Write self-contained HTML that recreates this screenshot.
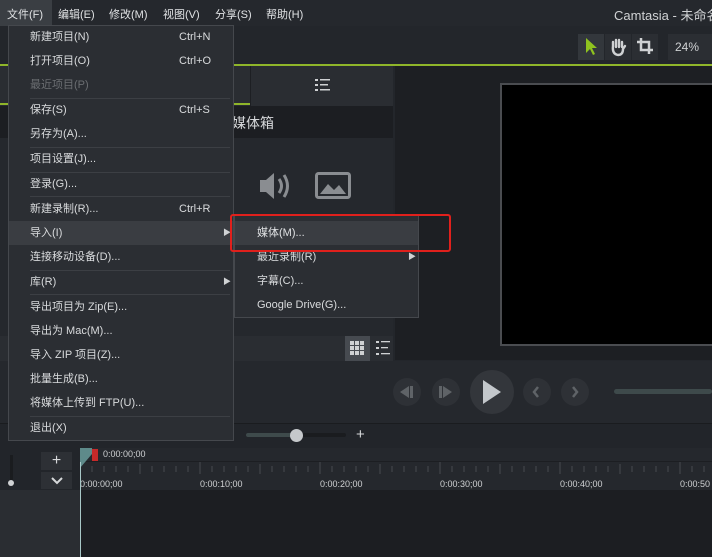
<!DOCTYPE html>
<html><head><meta charset="utf-8"><style>
*{margin:0;padding:0;box-sizing:border-box}
body{width:712px;height:557px;overflow:hidden;background:#23262b;font-family:"Liberation Sans","Noto Sans CJK SC",sans-serif;color:#d6d8da;font-size:11px;position:relative}
.a{position:absolute}
.mi{position:absolute;left:22px;height:24px;line-height:24px;font-size:11px;color:#d9dbdd}
.sc{position:absolute;left:171px;height:24px;line-height:24px;font-size:11px;color:#d9dbdd}
.sep{position:absolute;left:22px;width:200px;height:1px;background:#3c3f44}
</style></head><body>
<!-- top bar -->
<div class="a" style="left:0;top:0;width:712px;height:26px;background:#25282d"></div>
<div class="a" style="left:0;top:0;width:52px;height:26px;background:#3a3e43"></div>
<div class="a" style="left:7px;top:6px;font-size:11px;color:#e0e2e4;word-spacing:0">文件(F)</div>
<div class="a" style="left:58px;top:6px;color:#e0e2e4">编辑(E)</div>
<div class="a" style="left:109px;top:6px;color:#e0e2e4">修改(M)</div>
<div class="a" style="left:163px;top:6px;color:#e0e2e4">视图(V)</div>
<div class="a" style="left:215px;top:6px;color:#e0e2e4">分享(S)</div>
<div class="a" style="left:266px;top:6px;color:#e0e2e4">帮助(H)</div>
<div class="a" style="left:614px;top:5px;font-size:13px;color:#d0d2d4;white-space:nowrap">Camtasia - 未命名</div>
<!-- tools -->
<div class="a" style="left:578px;top:34px;width:26px;height:26px;background:#33373c"></div>
<svg class="a" style="left:584px;top:37px" width="14" height="20"><path d="M2 1 L2 16 L6 12 L9 18 L11 17 L8 11 L13 11 Z" fill="#8fc31f"/></svg>
<div class="a" style="left:605px;top:34px;width:26px;height:26px;background:#2b2e33"></div>
<svg class="a" style="left:609px;top:37px" width="18" height="20"><path d="M4 10 V5 M7 10 V3 M10 10 V3 M13 10 V5 M4 9 Q3 17 9 18 Q14 18 14 12 L16 9" stroke="#cfd1d3" stroke-width="2.4" fill="none" stroke-linecap="round"/></svg>
<div class="a" style="left:632px;top:34px;width:26px;height:26px;background:#2b2e33"></div>
<svg class="a" style="left:636px;top:37px" width="18" height="18"><path d="M5 1 V13 H17 M1 5 H13 V17" stroke="#cfd1d3" stroke-width="2.5" fill="none"/></svg>
<div class="a" style="left:668px;top:34px;width:44px;height:26px;background:#2b2e33"></div>
<div class="a" style="left:675px;top:40px;font-size:12px;color:#cfd1d3">24%</div>
<div class="a" style="left:0;top:64px;width:712px;height:2px;background:#8fb52a"></div>
<!-- left panel -->
<div class="a" style="left:0;top:66px;width:393px;height:40px;background:#2a2d32"></div>
<div class="a" style="left:250px;top:66px;width:1px;height:40px;background:#1d1f23"></div>
<div class="a" style="left:0;top:103px;width:250px;height:2px;background:#8fb52a"></div>
<svg class="a" style="left:315px;top:78px" width="16" height="16"><g fill="#cfd1d3"><rect x="0" y="1" width="3" height="2"/><rect x="5" y="1" width="10" height="1.5"/><rect x="0" y="6" width="3" height="2"/><rect x="5" y="6" width="8" height="1.5"/><rect x="0" y="11" width="3" height="2"/><rect x="5" y="11" width="10" height="1.5"/></g></svg>
<div class="a" style="left:0;top:106px;width:393px;height:32px;background:#1c1e22"></div>
<div class="a" style="left:232px;top:113px;font-size:14px;color:#d6d8da">媒体箱</div>
<div class="a" style="left:0;top:138px;width:393px;height:198px;background:#25282d"></div>
<svg class="a" style="left:258px;top:170px" width="40" height="32"><path d="M2 10 H8 L16 3 V29 L8 22 H2 Z" fill="#8a8d91"/><path d="M21 9 Q26 16 21 23" stroke="#8a8d91" stroke-width="3" fill="none"/><path d="M26 5 Q33 16 26 27" stroke="#8a8d91" stroke-width="3" fill="none"/></svg>
<svg class="a" style="left:315px;top:172px" width="36" height="27"><rect x="1.5" y="1.5" width="33" height="24" rx="2" stroke="#8a8d91" stroke-width="3" fill="none"/><path d="M5 22 L13 12 L19 18 L24 13 L31 22 Z" fill="#8a8d91"/></svg>
<div class="a" style="left:0;top:336px;width:393px;height:25px;background:#2a2d32"></div>
<div class="a" style="left:345px;top:336px;width:25px;height:25px;background:#464a50"></div>
<svg class="a" style="left:350px;top:341px" width="15" height="15"><g fill="#cfd1d3"><rect x="0" y="0" width="4" height="4"/><rect x="5" y="0" width="4" height="4"/><rect x="10" y="0" width="4" height="4"/><rect x="0" y="5" width="4" height="4"/><rect x="5" y="5" width="4" height="4"/><rect x="10" y="5" width="4" height="4"/><rect x="0" y="10" width="4" height="4"/><rect x="5" y="10" width="4" height="4"/><rect x="10" y="10" width="4" height="4"/></g></svg>
<svg class="a" style="left:376px;top:341px" width="15" height="15"><g fill="#cfd1d3"><rect x="0" y="0" width="3" height="2"/><rect x="5" y="0" width="9" height="1.3"/><rect x="0" y="6" width="3" height="2"/><rect x="5" y="6" width="7" height="1.3"/><rect x="0" y="12" width="3" height="2"/><rect x="5" y="12" width="9" height="1.3"/></g></svg>
<!-- preview -->
<div class="a" style="left:395px;top:66px;width:317px;height:294px;background:#1d1f23"></div>
<div class="a" style="left:500px;top:83px;width:212px;height:263px;background:#000;border:2px solid #4a4c50;border-right:none"></div>
<!-- controls -->
<div class="a" style="left:0;top:361px;width:712px;height:62px;background:#25282d"></div>
<div class="a" style="left:0;top:423px;width:712px;height:25px;background:#22252a;border-top:1px solid #1a1c1f"></div>
<div class="a" style="left:393px;top:378px;width:28px;height:28px;border-radius:50%;background:#2e3136"></div>
<div class="a" style="left:432px;top:378px;width:28px;height:28px;border-radius:50%;background:#2e3136"></div>
<div class="a" style="left:470px;top:370px;width:44px;height:44px;border-radius:50%;background:#33363b"></div>
<div class="a" style="left:523px;top:378px;width:28px;height:28px;border-radius:50%;background:#2e3136"></div>
<div class="a" style="left:561px;top:378px;width:28px;height:28px;border-radius:50%;background:#2e3136"></div>
<svg class="a" style="left:393px;top:378px" width="200" height="44"><path d="M7 14 L16 8 V20 Z M17 8 H20 V20 H17 Z" fill="#5f6367"/><path d="M46 8 H49 V20 H46 Z M50 8 L59 14 L50 20 Z" fill="#5f6367"/><path d="M90 2 L108 14 L90 26 Z" fill="#c3c7cb"/><path d="M145 9 L141 14 L145 19" stroke="#5f6367" stroke-width="2.5" fill="none"/><path d="M180 9 L184 14 L180 19" stroke="#5f6367" stroke-width="2.5" fill="none"/></svg>
<div class="a" style="left:614px;top:389px;width:98px;height:5px;border-radius:3px;background:#3e4a4b"></div>
<div class="a" style="left:246px;top:433px;width:100px;height:4px;border-radius:2px;background:#1a1c1f"></div>
<div class="a" style="left:246px;top:433px;width:50px;height:4px;border-radius:2px;background:#3e4a4b"></div>
<div class="a" style="left:290px;top:429px;width:13px;height:13px;border-radius:50%;background:#c5c8cb"></div>
<div class="a" style="left:356px;top:426px;font-size:15px;color:#d6d8da">+</div>
<!-- timeline -->
<div class="a" style="left:0;top:448px;width:80px;height:109px;background:#2a2d32"></div>
<div class="a" style="left:0;top:448px;width:80px;height:42px;background:#22252a"></div>
<div class="a" style="left:10px;top:455px;width:3px;height:28px;background:#1a1c1f"></div>
<div class="a" style="left:8px;top:480px;width:6px;height:6px;border-radius:50%;background:#d0d2d4"></div>
<div class="a" style="left:41px;top:452px;width:31px;height:18px;background:#2d3035;color:#d6d8da;font-size:16px;text-align:center;line-height:18px">+</div>
<div class="a" style="left:41px;top:472px;width:31px;height:17px;background:#2d3035"></div>
<svg class="a" style="left:51px;top:476px" width="12" height="9"><path d="M1 2 L6 7 L11 2" stroke="#d6d8da" stroke-width="2" fill="none"/></svg>
<div class="a" style="left:80px;top:448px;width:632px;height:42px;background:#25282d"></div>
<div class="a" style="left:80px;top:461px;width:632px;height:1px;background:#1c1e22"></div>
<svg class="a" style="left:80px;top:448px" width="632" height="42">
<g stroke="#474a4f" stroke-width="1">
<path d="M0 14 V26 M120 14 V26 M240 14 V26 M360 14 V26 M480 14 V26 M600 14 V26"/>
<path d="M12 18 V24 M24 18 V24 M36 18 V24 M48 18 V24 M60 16 V26 M72 18 V24 M84 18 V24 M96 18 V24 M108 18 V24 M132 18 V24 M144 18 V24 M156 18 V24 M168 18 V24 M180 16 V26 M192 18 V24 M204 18 V24 M216 18 V24 M228 18 V24 M252 18 V24 M264 18 V24 M276 18 V24 M288 18 V24 M300 16 V26 M312 18 V24 M324 18 V24 M336 18 V24 M348 18 V24 M372 18 V24 M384 18 V24 M396 18 V24 M408 18 V24 M420 16 V26 M432 18 V24 M444 18 V24 M456 18 V24 M468 18 V24 M492 18 V24 M504 18 V24 M516 18 V24 M528 18 V24 M540 16 V26 M552 18 V24 M564 18 V24 M576 18 V24 M588 18 V24 M612 18 V24 M624 18 V24"/>
</g>
<path d="M0 0 H12 V6 L0 20 Z" fill="#5e8a8a"/><rect x="12" y="1" width="6" height="12" fill="#c62a2a"/>
</svg>
<div class="a" style="left:103px;top:449px;font-size:9px;color:#cfd1d3">0:00:00;00</div>
<div class="a" style="left:80px;top:479px;font-size:9px;color:#cfd1d3">0:00:00;00</div>
<div class="a" style="left:200px;top:479px;font-size:9px;color:#cfd1d3">0:00:10;00</div>
<div class="a" style="left:320px;top:479px;font-size:9px;color:#cfd1d3">0:00:20;00</div>
<div class="a" style="left:440px;top:479px;font-size:9px;color:#cfd1d3">0:00:30;00</div>
<div class="a" style="left:560px;top:479px;font-size:9px;color:#cfd1d3">0:00:40;00</div>
<div class="a" style="left:680px;top:479px;font-size:9px;color:#cfd1d3">0:00:50</div>
<div class="a" style="left:80px;top:490px;width:632px;height:67px;background:#1c1e22"></div>
<div class="a" style="left:80px;top:462px;width:1px;height:95px;background:#a8c8c8"></div>
<!-- file menu -->
<div class="a" style="left:8px;top:25px;width:226px;height:416px;background:#2b2e33;border:1px solid #45484d"></div>
<div class="a" style="left:9px;top:221px;width:224px;height:24px;background:#3a3d42"></div>
<div class="a" style="left:8px;top:25px;width:226px">
<div class="mi" style="top:0">新建项目(N)</div><div class="sc" style="top:0">Ctrl+N</div>
<div class="mi" style="top:24px">打开项目(O)</div><div class="sc" style="top:24px">Ctrl+O</div>
<div class="mi" style="top:48px;color:#6b6e72">最近项目(P)</div>
<div class="sep" style="top:73px"></div>
<div class="mi" style="top:73px">保存(S)</div><div class="sc" style="top:73px">Ctrl+S</div>
<div class="mi" style="top:97px">另存为(A)...</div>
<div class="sep" style="top:122px"></div>
<div class="mi" style="top:122px">项目设置(J)...</div>
<div class="sep" style="top:147px"></div>
<div class="mi" style="top:147px">登录(G)...</div>
<div class="sep" style="top:171px"></div>
<div class="mi" style="top:172px">新建录制(R)...</div><div class="sc" style="top:172px">Ctrl+R</div>
<div class="mi" style="top:196px">导入(I)</div><div class="a" style="left:215px;top:196px;line-height:24px;font-size:8px;color:#d0d2d4">▶</div>
<div class="mi" style="top:220px">连接移动设备(D)...</div>
<div class="sep" style="top:245px"></div>
<div class="mi" style="top:245px">库(R)</div><div class="a" style="left:215px;top:245px;line-height:24px;font-size:8px;color:#d0d2d4">▶</div>
<div class="sep" style="top:269px"></div>
<div class="mi" style="top:270px">导出项目为 Zip(E)...</div>
<div class="mi" style="top:294px">导出为 Mac(M)...</div>
<div class="mi" style="top:318px">导入 ZIP 项目(Z)...</div>
<div class="mi" style="top:342px">批量生成(B)...</div>
<div class="mi" style="top:366px">将媒体上传到 FTP(U)...</div>
<div class="sep" style="top:391px"></div>
<div class="mi" style="top:391px">退出(X)</div>
</div>
<!-- submenu -->
<div class="a" style="left:234px;top:214px;width:185px;height:104px;background:#2b2e33;border:1px solid #45484d"></div>
<div class="a" style="left:235px;top:221px;width:183px;height:24px;background:#3a3d42"></div>
<div class="a" style="left:257px;top:221px;line-height:24px;color:#e0e2e4">媒体(M)...</div>
<div class="a" style="left:257px;top:245px;line-height:24px;color:#d9dbdd">最近录制(R)</div>
<div class="a" style="left:408px;top:245px;line-height:24px;font-size:8px;color:#d0d2d4">▶</div>
<div class="a" style="left:257px;top:269px;line-height:24px;color:#d9dbdd">字幕(C)...</div>
<div class="a" style="left:257px;top:293px;line-height:24px;color:#d9dbdd">Google Drive(G)...</div>
<div class="a" style="left:230px;top:214px;width:221px;height:38px;border:2px solid #e0201c;border-radius:3px"></div>
</body></html>
